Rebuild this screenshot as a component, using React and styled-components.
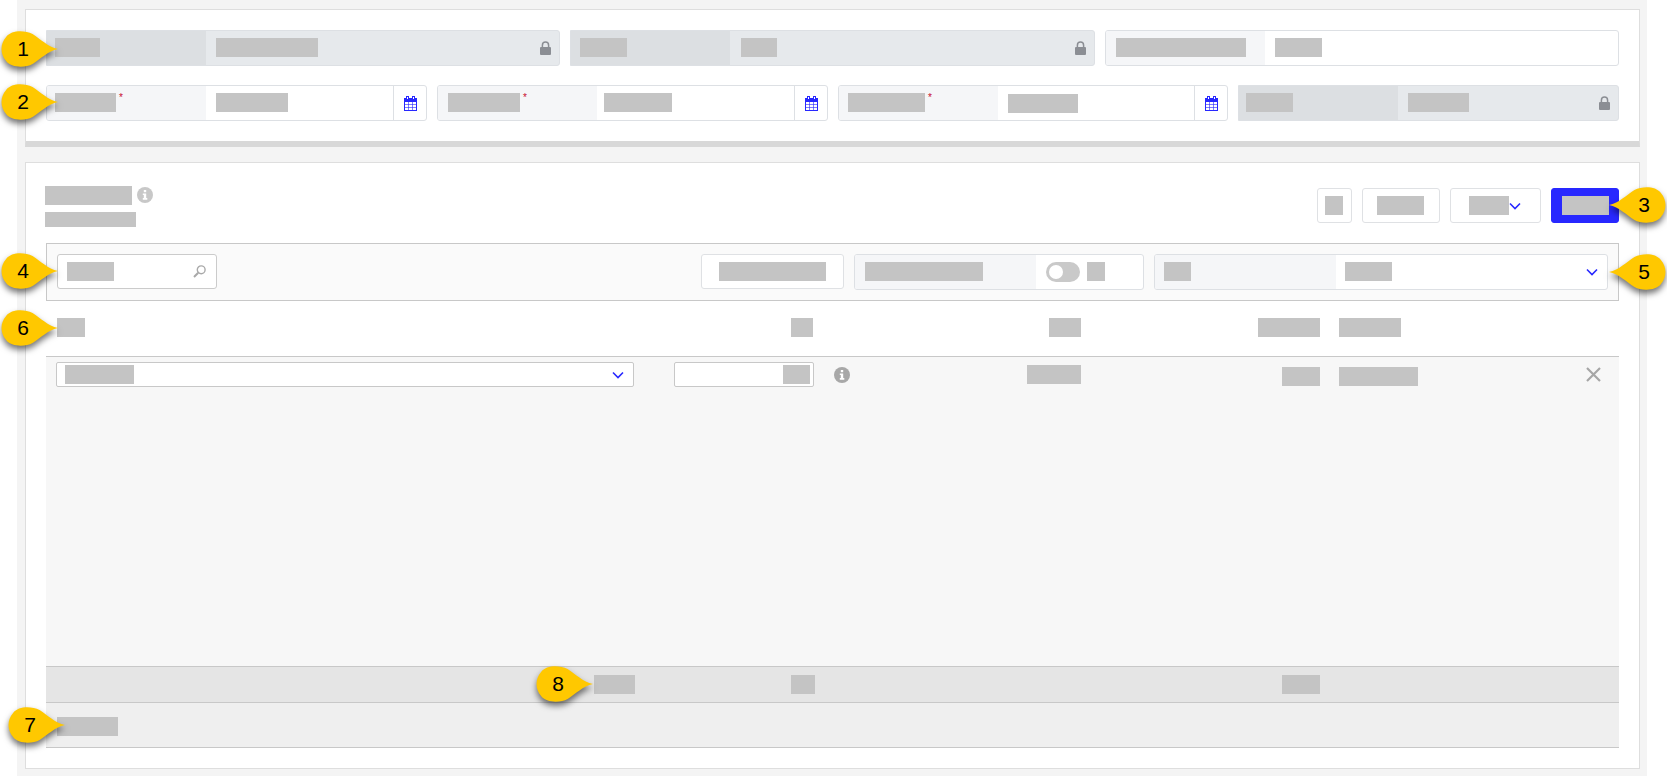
import styled, { createGlobalStyle } from "styled-components";

const GlobalStyle = createGlobalStyle`
  html, body {
    margin: 0;
    padding: 0;
    height: 100%;
    background: #fff;
    overflow: hidden;
    font-family: "Liberation Sans", Arial, sans-serif;
  }
  * { box-sizing: border-box; }
`;

const BLUE = "#2828ff";

function LockIcon() {
  return (
    <svg width="11" height="14" viewBox="0 0 11 14">
      <path d="M2.4 6.5V4.2a3.1 3.1 0 0 1 6.2 0v2.3" fill="none" stroke="#8b8e94" strokeWidth="1.5" />
      <rect x="0" y="6" width="11" height="8" rx="1" fill="#8b8e94" />
    </svg>
  );
}

function CalendarIcon() {
  return (
    <svg width="13" height="15" viewBox="0 0 13 15" fill="none" stroke={BLUE} strokeWidth="1">
      <rect x="0.5" y="2.5" width="12" height="12" fill="#fff" />
      <rect x="0.5" y="2.5" width="12" height="3" fill={BLUE} />
      <rect x="2.5" y="0.5" width="2" height="3" fill="#fff" />
      <rect x="8.5" y="0.5" width="2" height="3" fill="#fff" />
      <path d="M4.500 5.500v9M8.500 5.500v9M.5 8.500h12M.5 11.500h12" strokeWidth="0.6" />
    </svg>
  );
}

function Chevron() {
  return (
    <svg width="12" height="8" viewBox="0 0 12 8" fill="none">
      <path d="M1 1.5l5 5 5-5" stroke={BLUE} strokeWidth="1.6" />
    </svg>
  );
}

function SearchIcon() {
  return (
    <svg width="13" height="13" viewBox="0 0 13 13" fill="none" stroke="#a9a9a9">
      <circle cx="8.2" cy="4.8" r="3.9" strokeWidth="1.4" />
      <path d="M5.2 7.8L1 12" strokeWidth="2" />
    </svg>
  );
}

function InfoIcon({ color }) {
  return (
    <svg width="16" height="16" viewBox="0 0 16 16">
      <circle cx="8" cy="8" r="8" fill={color} />
      <rect x="6.8" y="3" width="2.4" height="2.2" fill="#fff" />
      <path d="M5.8 6.5h3.4v4.6h1.1v1.6H5.8v-1.6h1V8.100H5.800z" fill="#fff" />
    </svg>
  );
}

function CloseIcon() {
  return (
    <svg width="15" height="15" viewBox="0 0 15 15" fill="none">
      <path d="M1 1l13 13M14 1L1 14" stroke="#a6a6a6" strokeWidth="2.2" />
    </svg>
  );
}

const Page = styled.div`
  margin-left: 17px;
  width: 1630px;
  height: 776px;
  padding: 9px 7px 8px 8px;
  background: #f4f4f4;
  display: flex;
  flex-direction: column;
  gap: 15px;
`;

const TopPanel = styled.section`
  background: #fff;
  border: 1px solid #dedede;
  border-bottom: 6px solid #d8d8d8;
  padding: 20px;
  display: flex;
  flex-direction: column;
  gap: 19px;
`;

const FieldRow = styled.div`
  display: grid;
  grid-template-columns: ${(p) => p.$cols};
  gap: 10px;
`;

const MainPanel = styled.section`
  flex: 1;
  background: #fff;
  border: 1px solid #dedede;
  padding: 25px 20px 20px;
  display: flex;
  flex-direction: column;
`;

const Block = styled.span`
  display: block;
  flex: none;
  width: ${(p) => p.$w}px;
  height: ${(p) => p.$h || 19}px;
  background: #c4c4c4;
`;

const FieldBox = styled.div`
  height: 36px;
  ${(p) => (p.$w ? `width: ${p.$w}px;` : "")}
  display: flex;
  border: 1px solid #dde0e4;
  border-radius: ${(p) => (p.$square ? "0 3px 3px 0" : "3px")};
  overflow: hidden;
  background: ${(p) => (p.$locked ? "#e6e9ec" : "#fff")};
`;

const FieldLabel = styled.div`
  flex: none;
  width: ${(p) => p.$w || 159}px;
  display: flex;
  align-items: center;
  padding-left: ${(p) => p.$pad ?? 8}px;
  padding-bottom: 1px;
  background: ${(p) => (p.$locked ? "#dcdfe2" : "#f5f6f8")};
`;

const Required = styled.span`
  align-self: flex-start;
  margin: 7px 0 0 3px;
  color: #c8102e;
  font-size: 10px;
  line-height: 10px;
`;

const FieldValue = styled.div`
  flex: 1;
  display: flex;
  align-items: center;
  padding: ${(p) => p.$top || 0}px 0 1px ${(p) => p.$pad ?? 10}px;
`;

const LockSlot = styled.div`
  flex: none;
  display: flex;
  align-items: center;
  padding-right: 8px;
`;

const CalendarAddon = styled.div`
  flex: none;
  width: 33px;
  display: flex;
  align-items: center;
  justify-content: center;
  border-left: 1px solid #dde0e4;
`;

const HeadRow = styled.header`
  height: 35px;
  display: flex;
  justify-content: space-between;
  flex: none;
`;

const TitleWrap = styled.div`
  margin: -2px 0 0 -1px;
  display: flex;
  flex-direction: column;
  gap: 7px;
`;

const TitleLine = styled.div`
  display: flex;
  align-items: flex-start;
  gap: 5px;
`;

const IconSlot = styled.span`
  display: block;
  flex: none;
  height: 16px;
  margin-top: ${(p) => p.$top || 0}px;
`;

const Actions = styled.div`
  display: flex;
  gap: 10px;
`;

const Button = styled.button`
  height: 35px;
  width: ${(p) => p.$w}px;
  padding: 0 ${(p) => (p.$primary ? 0 : 1)}px 0 0;
  display: flex;
  align-items: center;
  justify-content: center;
  background: ${(p) => (p.$primary ? BLUE : "#fff")};
  border: 1px solid ${(p) => (p.$primary ? BLUE : "#dfe1e4")};
  border-radius: 3px;
`;

const Toolbar = styled.div`
  flex: none;
  margin-top: 20px;
  height: 58px;
  display: flex;
  align-items: flex-start;
  gap: 10px;
  padding: 10px;
  background: #fafafa;
  border: 1px solid #c8c8c8;
`;

const SearchBox = styled.div`
  width: 160px;
  height: 35px;
  display: flex;
  align-items: center;
  justify-content: space-between;
  padding: 0 10px 0 9px;
  background: #fff;
  border: 1px solid #cbcbcb;
  border-radius: 3px;
  margin-right: auto;
`;

const Toggle = styled.span`
  flex: none;
  width: 34px;
  height: 20px;
  padding: 3px;
  border-radius: 10px;
  background: #c9c9c9;
  margin-right: 7px;
`;

const Knob = styled.span`
  display: block;
  width: 14px;
  height: 14px;
  border-radius: 50%;
  background: #fff;
`;

const SelectEnd = styled.div`
  margin-left: auto;
  padding-right: 9px;
  display: flex;
  align-items: center;
`;

const TableGrid = styled.div`
  display: grid;
  grid-template-columns: 580px 178px 267px 239px 1fr;
  padding-left: 10px;
  flex: none;
`;

const TableHead = styled(TableGrid)`
  height: 55px;
  padding-top: 17px;
  align-items: start;
`;

const TableBody = styled(TableGrid)`
  height: 310px;
  padding-top: 5px;
  align-items: start;
  align-content: start;
  background: #f7f7f7;
  border-top: 1px solid #c8c8c8;
`;

const TotalRow = styled(TableGrid)`
  height: 37px;
  align-items: center;
  background: #e5e5e5;
  border-top: 1px solid #c8c8c8;
  border-bottom: 1px solid #c8c8c8;
`;

const Cell = styled.div`
  display: flex;
  min-width: 0;
  align-items: flex-start;
  justify-content: ${(p) => p.$justify || "flex-end"};
  padding: ${(p) => p.$top || 0}px ${(p) => p.$right || 0}px 0 ${(p) => p.$left || 0}px;
`;

const RowSelect = styled.div`
  width: 578px;
  height: 25px;
  display: flex;
  align-items: center;
  justify-content: space-between;
  padding: 0 9px 0 8px;
  background: #fff;
  border: 1px solid #c8c8c8;
  border-radius: 2px;
`;

const QtyInput = styled.div`
  width: 140px;
  height: 25px;
  display: flex;
  align-items: center;
  justify-content: flex-end;
  padding-right: 3px;
  background: #fff;
  border: 1px solid #c8c8c8;
  border-radius: 2px;
`;

const FooterRow = styled.div`
  flex: none;
  height: 45px;
  display: flex;
  align-items: center;
  padding: 3px 0 0 11px;
  background: #efefef;
  border-bottom: 1px solid #c8c8c8;
`;

const CalloutWrap = styled.div`
  position: absolute;
  left: ${(p) => p.$x}px;
  top: ${(p) => p.$y}px;
  width: 57px;
  height: 36px;
`;

const CalloutShape = styled.svg`
  position: absolute;
  inset: 0;
  overflow: visible;
  filter: drop-shadow(0 4px 3px rgba(0, 0, 0, 0.55));
  transform: ${(p) => (p.$flip ? "scaleX(-1)" : "none")};
`;

const CalloutNum = styled.span`
  position: absolute;
  top: 0;
  ${(p) => (p.$flip ? "right: 0;" : "left: 0;")}
  width: 44px;
  line-height: 36px;
  text-align: center;
  font-size: 21px;
  color: #000;
`;

function Callout({ n, x, y, flip }) {
  return (
    <CalloutWrap $x={x} $y={y}>
      <CalloutShape $flip={flip} width="57" height="36" viewBox="0 0 56 36" preserveAspectRatio="none">
        <path
          d="M56 18C46 20 39 28 31 33C24 37 10 37 5 30C-1 23 -1 13 5 6C10 -1 23 -1 31 3C39 8 46 16 56 18Z"
          fill="#ffc800"
        />
      </CalloutShape>
      <CalloutNum $flip={flip}>{n}</CalloutNum>
    </CalloutWrap>
  );
}

function Field({ label, value, locked, square, required, calendar, labelPad, valuePad, valueTop }) {
  return (
    <FieldBox $locked={locked} $square={square}>
      <FieldLabel $locked={locked} $pad={labelPad}>
        <Block $w={label} />
        {required && <Required>*</Required>}
      </FieldLabel>
      <FieldValue $pad={valuePad} $top={valueTop}>
        <Block $w={value} />
      </FieldValue>
      {locked && (
        <LockSlot>
          <LockIcon />
        </LockSlot>
      )}
      {calendar && (
        <CalendarAddon>
          <CalendarIcon />
        </CalendarAddon>
      )}
    </FieldBox>
  );
}

const callouts = [
  { n: 1, x: 1, y: 31 },
  { n: 2, x: 1, y: 84 },
  { n: 3, x: 1609, y: 187, flip: true },
  { n: 4, x: 1, y: 253 },
  { n: 5, x: 1609, y: 254, flip: true },
  { n: 6, x: 1, y: 310 },
  { n: 7, x: 8, y: 707 },
  { n: 8, x: 536, y: 666 },
];

export default function App() {
  return (
    <>
      <GlobalStyle />
      <Page>
        <TopPanel>
          <FieldRow $cols="514px 525px 514px">
            <Field locked square label={45} value={102} />
            <Field locked square label={47} value={36} labelPad={9} valuePad={11} />
            <Field label={130} value={47} labelPad={10} />
          </FieldRow>
          <FieldRow $cols="381px 391px 390px 381px">
            <Field required calendar label={61} value={72} />
            <Field required calendar label={72} value={68} labelPad={10} valuePad={7} />
            <Field required calendar label={77} value={70} labelPad={9} valueTop={2} />
            <Field locked square label={47} value={61} labelPad={7} />
          </FieldRow>
        </TopPanel>

        <MainPanel>
          <HeadRow>
            <TitleWrap>
              <TitleLine>
                <Block $w={87} />
                <IconSlot $top={1}>
                  <InfoIcon color="#c8c8c8" />
                </IconSlot>
              </TitleLine>
              <Block $w={91} $h={15} />
            </TitleWrap>
            <Actions>
              <Button $w={35}>
                <Block $w={18} />
              </Button>
              <Button $w={78}>
                <Block $w={47} />
              </Button>
              <Button $w={91}>
                <Block $w={40} />
                <Chevron />
              </Button>
              <Button $w={68} $primary>
                <Block $w={47} />
              </Button>
            </Actions>
          </HeadRow>

          <Toolbar>
            <SearchBox>
              <Block $w={47} />
              <SearchIcon />
            </SearchBox>
            <Button $w={143}>
              <Block $w={107} />
            </Button>
            <FieldBox $w={290}>
              <FieldLabel $w={181} $pad={10}>
                <Block $w={118} />
              </FieldLabel>
              <FieldValue $pad={10}>
                <Toggle>
                  <Knob />
                </Toggle>
                <Block $w={18} />
              </FieldValue>
            </FieldBox>
            <FieldBox $w={454}>
              <FieldLabel $w={181} $pad={9}>
                <Block $w={27} />
              </FieldLabel>
              <FieldValue $pad={9}>
                <Block $w={47} />
                <SelectEnd>
                  <Chevron />
                </SelectEnd>
              </FieldValue>
            </FieldBox>
          </Toolbar>

          <TableHead>
            <Cell $justify="flex-start" $left={1}>
              <Block $w={28} />
            </Cell>
            <Cell $right={1}>
              <Block $w={22} />
            </Cell>
            <Cell>
              <Block $w={32} />
            </Cell>
            <Cell>
              <Block $w={62} />
            </Cell>
            <Cell $justify="flex-start" $left={19}>
              <Block $w={62} />
            </Cell>
          </TableHead>

          <TableBody>
            <Cell $justify="flex-start">
              <RowSelect>
                <Block $w={69} />
                <Chevron />
              </RowSelect>
            </Cell>
            <Cell>
              <QtyInput>
                <Block $w={27} />
              </QtyInput>
            </Cell>
            <Cell $justify="space-between" $left={20} $top={3}>
              <IconSlot $top={2}>
                <InfoIcon color="#a8a8a8" />
              </IconSlot>
              <Block $w={54} />
            </Cell>
            <Cell $top={5}>
              <Block $w={38} />
            </Cell>
            <Cell $justify="space-between" $left={19} $right={18} $top={5}>
              <Block $w={79} />
              <IconSlot $top={0}>
                <CloseIcon />
              </IconSlot>
            </Cell>
          </TableBody>

          <TotalRow>
            <Cell $right={1}>
              <Block $w={41} />
            </Cell>
            <Cell $justify="flex-start" $left={155}>
              <Block $w={24} />
            </Cell>
            <Cell />
            <Cell>
              <Block $w={38} />
            </Cell>
          </TotalRow>

          <FooterRow>
            <Block $w={61} />
          </FooterRow>
        </MainPanel>
      </Page>
      {callouts.map((c) => (
        <Callout key={c.n} {...c} />
      ))}
    </>
  );
}
